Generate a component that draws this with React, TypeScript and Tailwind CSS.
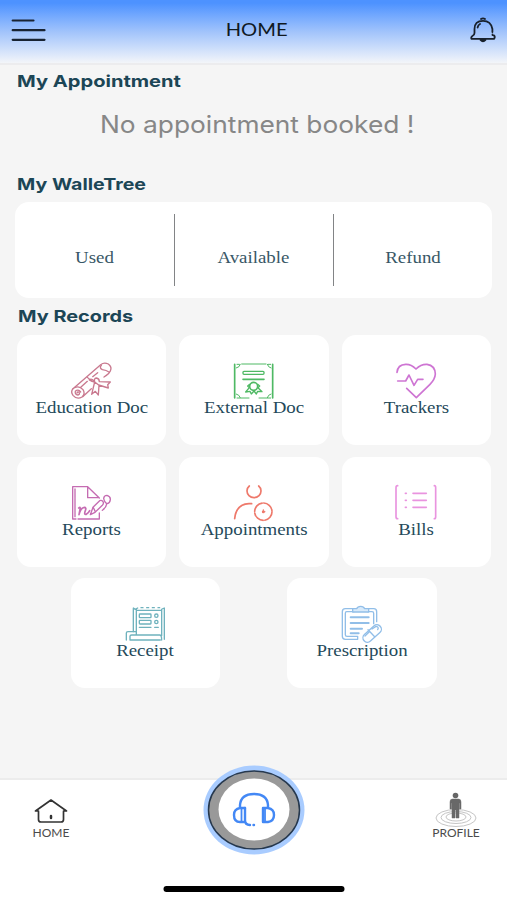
import type { ReactNode } from "react";

const serif = "font-['Liberation_Serif',serif]";
const inter = "font-['Inter',sans-serif]";
const lato = "font-['Lato',sans-serif]";

function Heading({ children, scale }: { children: ReactNode; scale: string }) {
  return (
    <h2 className={`${inter} h-5 w-max origin-left text-[16.5px] leading-5 font-bold whitespace-nowrap text-[#1c4656] ${scale}`}>
      {children}
    </h2>
  );
}

function Glyph({ view, color, children }: { view: string; color: string; children: ReactNode }) {
  return (
    <svg viewBox={view} className="h-10 w-12 shrink-0" fill="none" stroke={color} strokeWidth="5" strokeLinecap="round" strokeLinejoin="round">
      {children}
    </svg>
  );
}

function Card({ label, children }: { label: string; children: ReactNode }) {
  return (
    <div className="flex h-[110px] w-[149.500px] flex-col items-center rounded-[14px] bg-white pt-[26px]">
      {children}
      <span className={`${serif} -mt-[3px] scale-x-[1.11] text-[17px] leading-5 whitespace-nowrap text-[#24495a]`}>{label}</span>
    </div>
  );
}

function Education() {
  return (
    <Glyph view="21 18 144 120" color="#c9798f">
      <g strokeWidth="4">
        <path d="M39 101 L122 29 Q132 21 145 27 Q157 36 151 48 Q148 55 139 61 L132 66 M94 101 L68 125" />
        <path d="M39 101 Q31 111 39 121 Q51 135 66 126 Q77 116 69 104 Q58 91 44 98" />
        <path d="M62 111 Q54 101 46 109 Q44 119 54 120 Q61 118 57 112 Q53 109 51 114" />
        <path d="M124 31 Q117 39 127 44 Q139 45 148 52 M82 67 Q91 77 102 80 M63 96 L82 79 M98 65 L113 53" />
        <path d="M88 74 Q96 69 104 80 Q101 71 109 69 Q118 70 118 80 L151 81 L143 89 L145 99 L116 90 M104 81 Q96 80 88 75 M104 81 L95 118 L106 109 L115 120 L117 91 Z" />
      </g>
    </Glyph>
  );
}

function External() {
  return (
    <Glyph view="15 18 144 120" color="#4fb964">
      <path d="M29 28 V129 M143 28 V129" strokeWidth="5" />
      <path d="M36 28 H43 M50 27 H123 M130 28 H137 M36 129 H72 M102 129 H137 M46 28 Q44 37 34 39 M127 28 Q129 37 138 39 M34 117 Q43 119 46 128 M138 117 Q129 119 127 128" strokeWidth="3" />
      <rect x="54" y="49" width="63" height="9" rx="3" strokeWidth="4" />
      <path d="M54 73 H117" strokeWidth="5" />
      <circle cx="86" cy="94" r="12" strokeWidth="5" />
      <path d="M74 88 L68 93 L73 98 L62 111 L75 109 L79 117 L87 108 L94 117 L98 109 L111 110 L99 98 L104 93 L98 88" strokeWidth="4" />
    </Glyph>
  );
}

function Tracker() {
  return (
    <Glyph view="22 18 144 120" color="#ce75d3">
      <path d="M37 52 Q39 29 63 28 Q79 27 94 42 Q109 27 127 28 Q151 31 152 57 Q151 73 136 88 L95 128 L66 100" />
      <path d="M39 78 H63 L73 60 L88 91 L99 73 H115" />
    </Glyph>
  );
}

function Reports() {
  return (
    <Glyph view="21 15 144 120" color="#c56cb2">
      <g strokeWidth="4">
        <path d="M48 123 H38 V26 H83 L118 60 M83 26 V59 H116 M45 33 V116" />
        <path d="M56 90 Q62 84 60 94 L57 110 Q62 89 73 88 Q80 88 76 98 Q71 111 79 109 Q85 106 89 98" strokeWidth="5" />
        <path d="M91 110 L99 88 L119 68 Q127 65 130 73 Q131 78 127 82 L105 103 Z" />
        <path d="M131 61 Q132 52 141 52 Q152 55 151 65 Q150 75 142 77 Q134 75 131 61 M100 89 L106 101 M140 78 Q139 88 127 97" />
        <path d="M54 123 H118 V105" />
      </g>
    </Glyph>
  );
}

function Appointment() {
  return (
    <Glyph view="15 15 144 120" color="#ee796b">
      <path d="M73 24 A21 20 0 1 0 101 24" />
      <path d="M29 122 Q33 79 72 77 H80" />
      <circle cx="115" cy="101" r="26" strokeDasharray="36 5" />
      <path d="M115 95 V101 H120" strokeWidth="3" />
      <circle cx="115" cy="101" r="2" fill="#ee796b" />
    </Glyph>
  );
}

function Bills() {
  return (
    <Glyph view="22 15 144 120" color="#e994df">
      <path d="M39 23 Q34 23 34 29 V116 Q34 122 39 122 M149 23 Q153 23 153 29 V116 Q153 122 149 122" />
      <path d="M85 46 H125 M85 67 H125 M85 88 H125 M62 46 H65 M62 67 H65 M62 88 H65" />
    </Glyph>
  );
}

function Receipt() {
  return (
    <Glyph view="33 27 144 120" color="#6fb2bd">
      <g strokeWidth="4">
        <path d="M70 110 V40 M79 110 V43 M163 133 V40 M155 122 V43 M70 39 L76 43 L83 39 M93 38 H99 M110 38 H116 M127 38 H133 M144 38 H149 M156 42 L163 39 M80 46 H154" />
        <rect x="88" y="57" width="35" height="11" rx="2" />
        <rect x="88" y="76" width="35" height="11" rx="2" />
        <circle cx="139" cy="62" r="5" />
        <circle cx="139" cy="81" r="5" />
        <path d="M88 97 H123 M134 97 H145" />
        <path d="M49 135 V114 Q49 110 54 110 H79 V120 M60 135 V124 Q60 120 65 120 H149 Q155 120 155 135 M61 135 H151" />
      </g>
    </Glyph>
  );
}

function Prescription() {
  return (
    <Glyph view="24 27 144 120" color="#91bee8">
      <g strokeWidth="4">
        <path d="M72 41 H46 Q37 41 37 50 V124 Q37 133 46 133 H83 V124 M112 41 H131 Q140 41 140 50 V80 M72 50 H50 Q46 50 46 55 V119 Q46 124 51 124 H83 M112 50 H126 Q131 50 131 55 V86" />
        <path d="M68 41 V51 H116 V41 H104 Q101 34 92 34 Q83 34 80 41 Z" fill="#d8eafa" />
        <path d="M62 67 H116 M62 84 H116 M62 101 H96 M62 115 H86" strokeWidth="6" />
        <rect x="94" y="102" width="65" height="27" rx="13.5" transform="rotate(-42 126.500 115.500)" fill="white" />
        <path d="M114 104 L134 125 M105 123 L118 110 M126 102 L138 94 Q148 96 143 104" />
      </g>
    </Glyph>
  );
}

const wallet = ["Used", "Available", "Refund"];

export default function App() {
  return (
    <main className="flex h-[900px] w-[507px] flex-col overflow-hidden bg-[#f5f5f5]">
      <header className="flex h-[65px] shrink-0 items-center justify-between border-b-2 border-[#ececee] bg-linear-to-b from-[#4d92ff] from-5% via-[#a4c5fb] via-52% to-[#f3f5f9] pr-[11px] pb-1 pl-[11px]">
        <svg viewBox="0 0 34 24" className="h-6 w-[35px]" fill="none" stroke="#182332" strokeWidth="2.2" strokeLinecap="round">
          <path d="M1.200 2.500 H22 M1.200 12.200 H33 M1.200 21.800 H33" />
        </svg>
        <h1 className={`${lato} -mt-0.5 ml-[-3px] scale-x-[1.12] text-[18px] leading-6 text-[#10191f]`}>HOME</h1>
        <svg viewBox="0 0 26 26" className="h-[26px] w-[26px]" fill="none" stroke="#18212c" strokeWidth="1.800" strokeLinecap="round" strokeLinejoin="round">
          <path d="M11 2 Q13 .6 15 2 M4.500 16 V12 Q4.500 3.800 13 3.800 Q21 3.800 22.400 12 V15 M4.500 16 Q4.500 18 2.400 19 Q.8 20 1.400 21.800 H24 Q25.500 20 24 18.500 M22.500 17.500 V18 M7.600 10.500 Q8 8 10 7" />
          <path d="M10.500 23 Q13 25.800 15.500 23 Z" fill="#18212c" />
        </svg>
      </header>

      <section className="flex h-[109px] shrink-0 flex-col pt-[6px] pl-[17px]">
        <Heading scale="scale-x-[1.218]">My Appointment</Heading>
        <p className={`${inter} mt-5 ml-[83px] w-max origin-left scale-x-[1.097] text-[24px] leading-7 whitespace-nowrap text-[#878787]`}>
          No appointment booked !
        </p>
      </section>

      <section className="shrink-0 px-[15px]">
        <div className="ml-0.5">
          <Heading scale="scale-x-[1.187]">My WalleTree</Heading>
        </div>
        <div className="mt-2 grid h-24 grid-cols-[159.500px_159.500px_158px] rounded-[14px] bg-white py-3">
          {wallet.map((name, i) => (
            <div key={name} className={`flex items-center justify-center pt-[15px] ${i < 2 ? "border-r-[1.5px] border-[#828486]" : ""}`}>
              <span className={`${serif} scale-x-[1.11] text-[17px] leading-5 text-[#385766]`}>{name}</span>
            </div>
          ))}
        </div>
      </section>

      <section className="shrink-0 pt-2 pl-[16.500px]">
        <div className="ml-px">
          <Heading scale="scale-x-[1.205]">My Records</Heading>
        </div>
        <div className="mt-[9px] flex flex-col gap-3">
          <div className="flex gap-[13px]">
            <Card label="Education Doc"><Education /></Card>
            <Card label="External Doc"><External /></Card>
            <Card label="Trackers"><Tracker /></Card>
          </div>
          <div className="flex gap-[13px]">
            <Card label="Reports"><Reports /></Card>
            <Card label="Appointments"><Appointment /></Card>
            <Card label="Bills"><Bills /></Card>
          </div>
          <div className="-mt-px flex gap-[67px] pl-[54px]">
            <Card label="Receipt"><Receipt /></Card>
            <Card label="Prescription"><Prescription /></Card>
          </div>
        </div>
      </section>

      <nav className="relative mt-auto h-[122px] shrink-0 border-t-2 border-[#ececec] bg-white">
        <div className="flex justify-between pr-[27px] pl-8">
          <div className="flex w-[38px] flex-col items-center pt-[18px]">
            <svg viewBox="0 0 34 26" className="h-[26px] w-[34px]" fill="none" stroke="#333" strokeWidth="1.700" strokeLinecap="round" strokeLinejoin="round">
              <path d="M4.500 13 H1.500 L17 2 L32.500 13 H29.500 M4.500 13.500 V21.500 Q4.500 24 7 24 H27 Q29.500 24 29.500 21.500 V13.500" />
              <path d="M17 18 V20" strokeWidth="2.500" />
            </svg>
            <span className={`${lato} mt-px text-[12px] leading-4 text-[#4b4b4b]`}>HOME</span>
          </div>
          <div className="flex w-[48px] flex-col items-center pt-3">
            <svg viewBox="0 0 42 36" className="h-9 w-[42px]" fill="none">
              <g stroke="#c5c5c5">
                <ellipse cx="21" cy="26" rx="20" ry="8.500" />
                <ellipse cx="21" cy="25.500" rx="15" ry="6" />
                <ellipse cx="21" cy="25" rx="10" ry="4" />
              </g>
              <circle cx="20.500" cy="3.500" r="2.800" fill="#666" />
              <path d="M17.500 7 H23.500 Q26 7 26 10 V17 H24.500 V11 H24 V26 H21 V18 H20 V26 H17 V11 H16.500 V17 H15 V10 Q15 7 17.500 7 Z" fill="#686868" stroke="#686868" strokeWidth=".5" />
            </svg>
            <span className={`${lato} -mt-[3px] text-[12px] leading-4 text-[#4b4b4b]`}>PROFILE</span>
          </div>
        </div>
        <svg viewBox="0 0 102 90" className="absolute top-[-15px] left-[203px] h-[90px] w-[102px]" fill="none">
          <ellipse cx="51" cy="45" rx="50.500" ry="44.500" fill="#a9ccff" />
          <ellipse cx="51" cy="45" rx="45.500" ry="39" fill="#999" stroke="#26384e" strokeWidth="1.500" />
          <ellipse cx="51" cy="44.500" rx="35.500" ry="31" fill="white" />
          <g stroke="#4388f5" strokeWidth="2.400" strokeLinecap="round" strokeLinejoin="round">
            <path d="M37 42 V40 Q38 29 51 29 Q64 29 65 40 V42" />
            <path d="M42 43 H37 Q31 44 31 50 Q31 57 37 57 H41 M60 43 V57 H65 Q71 56 71 50 Q71 44 65 43 Z" />
            <path d="M38.500 43 V57 M62 44 V57" strokeWidth="1.800" />
            <path d="M42 43 V55 Q42 60 47 60 M50.500 60 H51" />
          </g>
        </svg>
        <div className="absolute bottom-2 left-1/2 h-[6px] w-[181px] -translate-x-1/2 rounded-full bg-black" />
      </nav>
    </main>
  );
}
